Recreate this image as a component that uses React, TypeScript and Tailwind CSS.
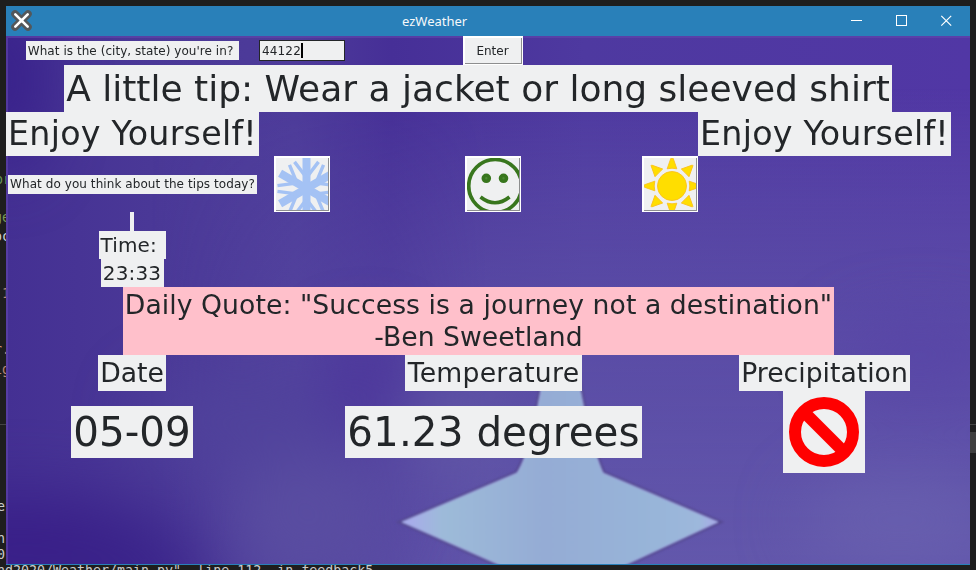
import React from 'react';

type LabelProps = { className: string; children?: React.ReactNode };

function Label({ className, children }: LabelProps) {
  return (
    <div className={`flex shrink-0 items-center justify-center whitespace-pre bg-[#eff0f1] text-[#232629] ${className}`}>
      {children}
    </div>
  );
}

function IconButton({ className, children }: LabelProps) {
  return (
    <button className={`h-14 w-14 shrink-0 border-2 border-r border-b border-white bg-[#eff0f1] ${className}`}>
      <span className="block h-[53px] w-[53px] overflow-hidden border-r border-b border-[#8d8e8f]">{children}</span>
    </button>
  );
}

function Snowflake() {
  return (
    <svg width="52" height="52" viewBox="0 0 52 52" stroke="#a4c2f4" fill="none">
      {[0, 60, 120, 180, 240, 300].map((a) => (
        <g key={a} transform={`translate(30.5 30.5) rotate(${a})`}>
          <path d="M0 0V-30.5" strokeWidth="8" />
          <path d="M12 -26.6L0.5 -11.5M-12 -26.6L-0.5 -11.5" strokeWidth="3.4" />
        </g>
      ))}
      <circle cx="30.5" cy="30.5" r="7.5" fill="#a4c2f4" stroke="none" />
    </svg>
  );
}

function Smiley() {
  return (
    <svg width="52" height="52" viewBox="0 0 52 52" fill="none" stroke="#38761d">
      <circle cx="28.2" cy="28" r="26.5" strokeWidth="3.7" />
      <circle cx="19.3" cy="20.3" r="3" strokeWidth="3.6" fill="#4b8a32" />
      <circle cx="36.5" cy="20.3" r="3" strokeWidth="3.6" fill="#4b8a32" />
      <path d="M13.5 39Q28 50.5 42.5 39" strokeWidth="3.6" />
    </svg>
  );
}

function Sun() {
  return (
    <svg width="52" height="52" viewBox="0 0 52 52" fill="#ffde00" stroke="#fcc21b" strokeWidth="0.9">
      <circle cx="28" cy="28" r="14.5" />
      {[0, 90, 180, 270].map((a) => (
        <path key={a} d="M-1.2 -27.6H1.2L4.8 -17.2Q0 -18.4 -4.8 -17.2Z" transform={`translate(28 28) rotate(${a})`} />
      ))}
      {[45, 135, 225, 315].map((a) => (
        <path key={a} d="M-0.4 -29.2H0.4L5.4 -18.6Q0 -18.8 -5.4 -18.6Z" transform={`translate(28 28) rotate(${a})`} />
      ))}
    </svg>
  );
}

function Wallpaper() {
  return (
    <svg className="absolute inset-0" width="964" height="528" viewBox="6 36 964 528" preserveAspectRatio="none">
      <defs>
        <linearGradient id="base" x1="0" y1="0" x2="1" y2="0">
          <stop offset="0" stopColor="#443093" />
          <stop offset="0.15" stopColor="#4a3897" />
          <stop offset="0.3" stopColor="#4d3b9a" />
          <stop offset="0.4" stopColor="#462f97" />
          <stop offset="0.6" stopColor="#4e39a0" />
          <stop offset="1" stopColor="#5137a5" />
        </linearGradient>
        <linearGradient id="low" x1="0" y1="0" x2="0" y2="1">
          <stop offset="0.1" stopColor="#6a62ae" stopOpacity="0" />
          <stop offset="0.5" stopColor="#6056a8" stopOpacity="0.6" />
          <stop offset="1" stopColor="#665dad" stopOpacity="0.85" />
        </linearGradient>
        <linearGradient id="sideFade" x1="0" y1="0" x2="1" y2="0">
          <stop offset="0.15" stopColor="#000" />
          <stop offset="0.5" stopColor="#fff" />
        </linearGradient>
        <mask id="rightSide"><rect x="6" y="36" width="964" height="528" fill="url(#sideFade)" /></mask>
        <filter id="glow" x="-60%" y="-60%" width="220%" height="220%" colorInterpolationFilters="sRGB"><feGaussianBlur stdDeviation="32" /></filter>
        <filter id="soft" colorInterpolationFilters="sRGB"><feGaussianBlur stdDeviation="0.8" /></filter>
        <linearGradient id="star" x1="0" y1="0" x2="1" y2="0">
          <stop offset="0" stopColor="#aaa9ee" />
          <stop offset="0.13" stopColor="#9dbbd9" />
          <stop offset="0.45" stopColor="#95acd5" />
          <stop offset="0.8" stopColor="#98b5d9" />
          <stop offset="0.94" stopColor="#9db8dc" />
          <stop offset="1" stopColor="#aaaae9" />
        </linearGradient>
      </defs>
      <rect x="6" y="36" width="964" height="528" fill="url(#base)" />
      <rect x="6" y="36" width="964" height="528" fill="url(#low)" mask="url(#rightSide)" />
      <g filter="url(#glow)">
        <ellipse cx="20" cy="550" rx="150" ry="55" fill="#391f88" />
        <ellipse cx="140" cy="580" rx="70" ry="60" fill="#3a2389" opacity="0.8" />
        <ellipse cx="5" cy="80" rx="35" ry="90" fill="#371f8a" />
        <ellipse cx="310" cy="520" rx="80" ry="65" fill="#5a4ea1" opacity="0.9" />
        <ellipse cx="455" cy="430" rx="50" ry="50" fill="#6359a6" opacity="0.75" />
        <ellipse cx="365" cy="385" rx="35" ry="50" fill="#4a309a" opacity="0.75" />
        <ellipse cx="240" cy="420" rx="100" ry="45" fill="#50429b" opacity="0.9" />
        <ellipse cx="920" cy="355" rx="80" ry="35" fill="#5743a6" opacity="0.7" />
        <ellipse cx="900" cy="520" rx="100" ry="45" fill="#6d65b0" opacity="0.6" />
      </g>
      <path d="M546 360C538 410 529 455 517 473L402 522L502 566H623L718 522L603 473C593 450 584 415 575 360Z" fill="none" stroke="#554991" strokeWidth="5" filter="url(#soft)" />
      <path d="M546 360C538 410 529 455 517 473L402 522L502 566H623L718 522L603 473C593 450 584 415 575 360Z" fill="url(#star)" stroke="#a5b0e5" strokeWidth="1" filter="url(#soft)" />
      <path d="M6 37H970M7 36V564" stroke="#6346ad" strokeOpacity="0.6" strokeWidth="2" />
    </svg>
  );
}

const fragments = [
  { text: 'or', cls: 'left-[-5px] top-[172px] text-[#6a9955]' },
  { text: 'ge', cls: 'left-[-6px] top-[210px] text-[#7c9a55]' },
  { text: 'oc', cls: 'left-[-6px] top-[229px] text-[#d4d4d4]' },
  { text: '1', cls: 'left-[2px] top-[286px] text-[#b98672]' },
  { text: 'r.', cls: 'left-[-6px] top-[342px] text-[#ce9178]' },
  { text: 'ig', cls: 'left-[-6px] top-[362px] text-[#b98672]' },
  { text: 'e', cls: 'left-[-3px] top-[499px] text-[#cccccc]' },
  { text: 'n', cls: 'left-[-3px] top-[531px] text-[#cccccc]' },
  { text: '0', cls: 'left-[-3px] top-[547px] text-[#cccccc]' },
  { text: 'nd2020/Weather/main.py", line 112, in feedback5', cls: 'left-[-3px] top-[563px] text-[#cccccc]' },
];

export default function App() {
  return (
    <div className="relative h-[570px] w-[976px] overflow-hidden bg-[#1e1e1e] p-1.5 font-['DejaVu_Sans',sans-serif]">
      {fragments.map((f) => (
        <span key={f.cls} className={`absolute whitespace-pre font-['DejaVu_Sans_Mono',monospace] text-[13.3px] leading-4 ${f.cls}`}>{f.text}</span>
      ))}
      <span className="absolute left-0 top-[424px] h-px w-full bg-[#444]" />
      <span className="absolute right-0 top-[432px] h-[21px] w-1.5 bg-[#3e3e3e]" />

      <main className="relative flex h-[559px] w-[964px] flex-col border-b border-[#2980b9] bg-[#4b3999]">
        <header className="flex h-[30px] shrink-0 items-center bg-[#2980b9] text-[#f5f8fa]">
          <svg className="ml-1 shrink-0" width="24" height="24" viewBox="0 0 24 24" fill="none" strokeLinecap="round">
            <path d="M5 5L18 18M18 5L5 18" stroke="#53575a" strokeWidth="7.5" />
            <path d="M5.3 5.3L17.7 17.7M17.7 5.3L5.3 17.7" stroke="#fff" strokeWidth="2.6" />
            <path d="M11.5 9.5L13.5 11.5L11.5 13.5L9.5 11.5Z" fill="#fff" />
          </svg>
          <h1 className="ml-[368px] w-[66px] whitespace-nowrap font-['Noto_Sans',sans-serif] text-[13px] leading-none">ezWeather</h1>
          <svg className="ml-[377px] shrink-0" width="110" height="30" viewBox="845 6 110 30" fill="none" stroke="#fff">
            <path d="M851 20.5H862" />
            <rect x="896.5" y="15.5" width="10" height="10" />
            <path d="M941.3 15.8L951.2 25.7M951.2 15.8L941.3 25.7" strokeWidth="1.2" />
          </svg>
        </header>

        <section className="relative h-[528px] shrink-0 overflow-hidden">
          <Wallpaper />
          <div className="relative flex flex-col items-start">
            <div className="flex h-[29px] items-center pl-5">
              <Label className="h-[19px] w-[213px] text-[12px] tracking-[0.05px]">{"What is the (city, state) you're in? "}</Label>
              <div className="ml-5 flex h-[21px] w-[86px] items-center border border-[#232629] bg-[#eff0f1] pl-0.5 text-[12px] tracking-[0.15px] text-[#232629]">
                44122<span className="h-[15px] w-0.5 bg-black" />
              </div>
              <button className="ml-[118px] h-[29px] w-[60px] border-2 border-r border-b border-white bg-[#eff0f1] text-[12px] text-[#232629]">
                <span className="flex h-[26px] w-[57px] items-center justify-center border-r border-b border-[#8d8e8f] pr-px">Enter</span>
              </button>
            </div>
            <Label className="ml-[58px] h-[47px] w-[828px] text-[36px]">A little tip: Wear a jacket or long sleeved shirt</Label>
            <div className="flex">
              <Label className="h-11 w-[253px] text-[33.3px] tracking-[0.24px]">Enjoy Yourself!</Label>
              <Label className="ml-[439px] h-11 w-[253px] text-[33.3px] tracking-[0.24px]">Enjoy Yourself!</Label>
            </div>
            <div className="flex items-center pl-0.5">
              <Label className="h-[19px] w-[249px] text-[12px] tracking-[0.07px]">What do you think about the tips today?</Label>
              <IconButton className="ml-[17px]"><Snowflake /></IconButton>
              <IconButton className="ml-[135px]"><Smiley /></IconButton>
              <IconButton className="ml-[121px]"><Sun /></IconButton>
            </div>
            <div className="flex w-[253px] flex-col items-center pr-px">
              <Label className="h-[19px] w-1" />
              <Label className="h-7 w-[67px] text-[20px] tracking-[0.15px]">{'Time: '}</Label>
              <Label className="h-7 w-[63px] text-[20px] tracking-[0.15px]">23:33</Label>
            </div>
            <div className="ml-[117px] flex h-[68px] w-[711px] flex-col items-center justify-center whitespace-nowrap bg-[#ffc0cb] text-[26.67px] leading-8 text-[#232629]">
              <p className="tracking-[0.06px]">Daily Quote: "Success is a journey not a destination"</p>
              <p>-Ben Sweetland</p>
            </div>
            <div className="flex">
              <Label className="ml-[92px] h-9 w-[68px] text-[26.67px]">Date</Label>
              <Label className="ml-[239px] h-9 w-[177px] text-[26.67px] tracking-[0.25px]">Temperature</Label>
              <Label className="ml-[157px] h-9 w-[171px] text-[26.67px]">Precipitation</Label>
            </div>
            <div className="flex items-center">
              <Label className="ml-[65px] h-[52px] w-[122px] text-[40.4px]">05-09</Label>
              <Label className="ml-[152px] h-[52px] w-[297px] text-[40.4px] tracking-[0.1px]">61.23 degrees</Label>
              <Label className="ml-[141px] h-[82px] w-[82px]">
                <svg width="82" height="82" viewBox="0 0 82 82" fill="none" stroke="#ff0000" strokeWidth="12">
                  <circle cx="41" cy="41" r="29" />
                  <path d="M21 21L61 61" />
                </svg>
              </Label>
            </div>
          </div>
        </section>
      </main>
    </div>
  );
}
